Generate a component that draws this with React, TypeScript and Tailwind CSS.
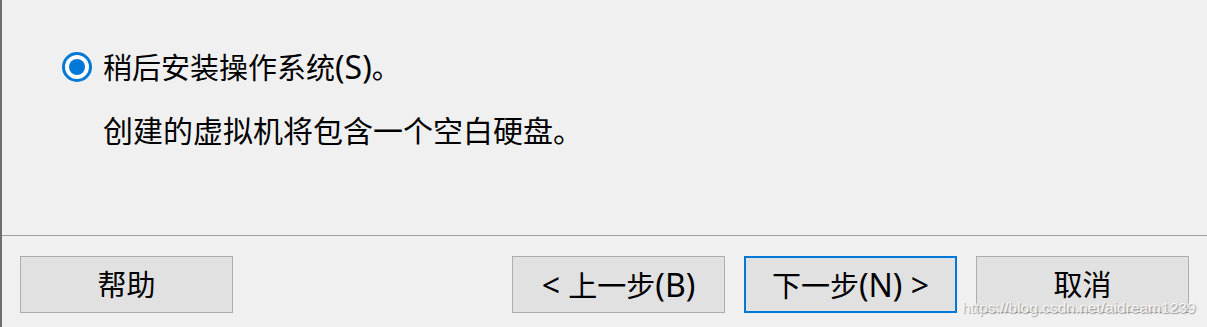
const Latin: React.FC<{ children: React.ReactNode }> = ({ children }) => (
  <span className="text-[32px]">{children}</span>
);

const App: React.FC = () => {
  return (
    <main className="relative w-[1207px] h-[327px] bg-[#f0f0f0] border-l-2 border-[#6d6d6d] flex flex-col overflow-hidden font-['Noto_Sans','Noto_Sans_CJK_SC',sans-serif] text-[29px] text-black">
      <section className="h-[235px] pt-[49px]">
        <div className="flex items-center h-9 pl-[60px] gap-[11px]">
          <span className="w-[30px] h-[30px] rounded-full border-[3px] border-[#0078d7] bg-white flex items-center justify-center">
            <span className="w-[16px] h-[16px] rounded-full bg-[#0078d7]" />
          </span>
          <span className="leading-9">
            稍后安装操作系统<Latin>(S)</Latin>。
          </span>
        </div>
        <p className="mt-[28px] h-9 leading-9 pl-[101px] text-[30px]">
          创建的虚拟机将包含一个空白硬盘。
        </p>
      </section>

      <footer className="flex-1 border-t border-[#a0a0a0] pt-5 pl-[18px] pr-[18px] flex justify-between items-start">
        <button className="w-[213px] h-[57px] bg-[#e1e1e1] border border-[#adadad] leading-none">
          帮助
        </button>
        <div className="flex gap-[19px]">
          <button className="w-[213px] h-[57px] bg-[#e1e1e1] border border-[#adadad] leading-none">
            <Latin>&lt; </Latin>上一步<Latin>(B)</Latin>
          </button>
          <button className="w-[213px] h-[57px] bg-[#e1e1e1] border-2 border-[#0078d7] leading-none">
            下一步<Latin>(N) &gt;</Latin>
          </button>
          <button className="w-[213px] h-[57px] bg-[#e1e1e1] border border-[#adadad] leading-none">
            取消
          </button>
        </div>
      </footer>

      <span className="absolute left-[960px] top-[300px] font-['Liberation_Sans',sans-serif] text-[15.5px] leading-none text-white/80 [text-shadow:1px_1px_1px_rgba(0,0,0,0.35)]">
        https://blog.csdn.net/aidream1239
      </span>
    </main>
  );
};

export default App;
